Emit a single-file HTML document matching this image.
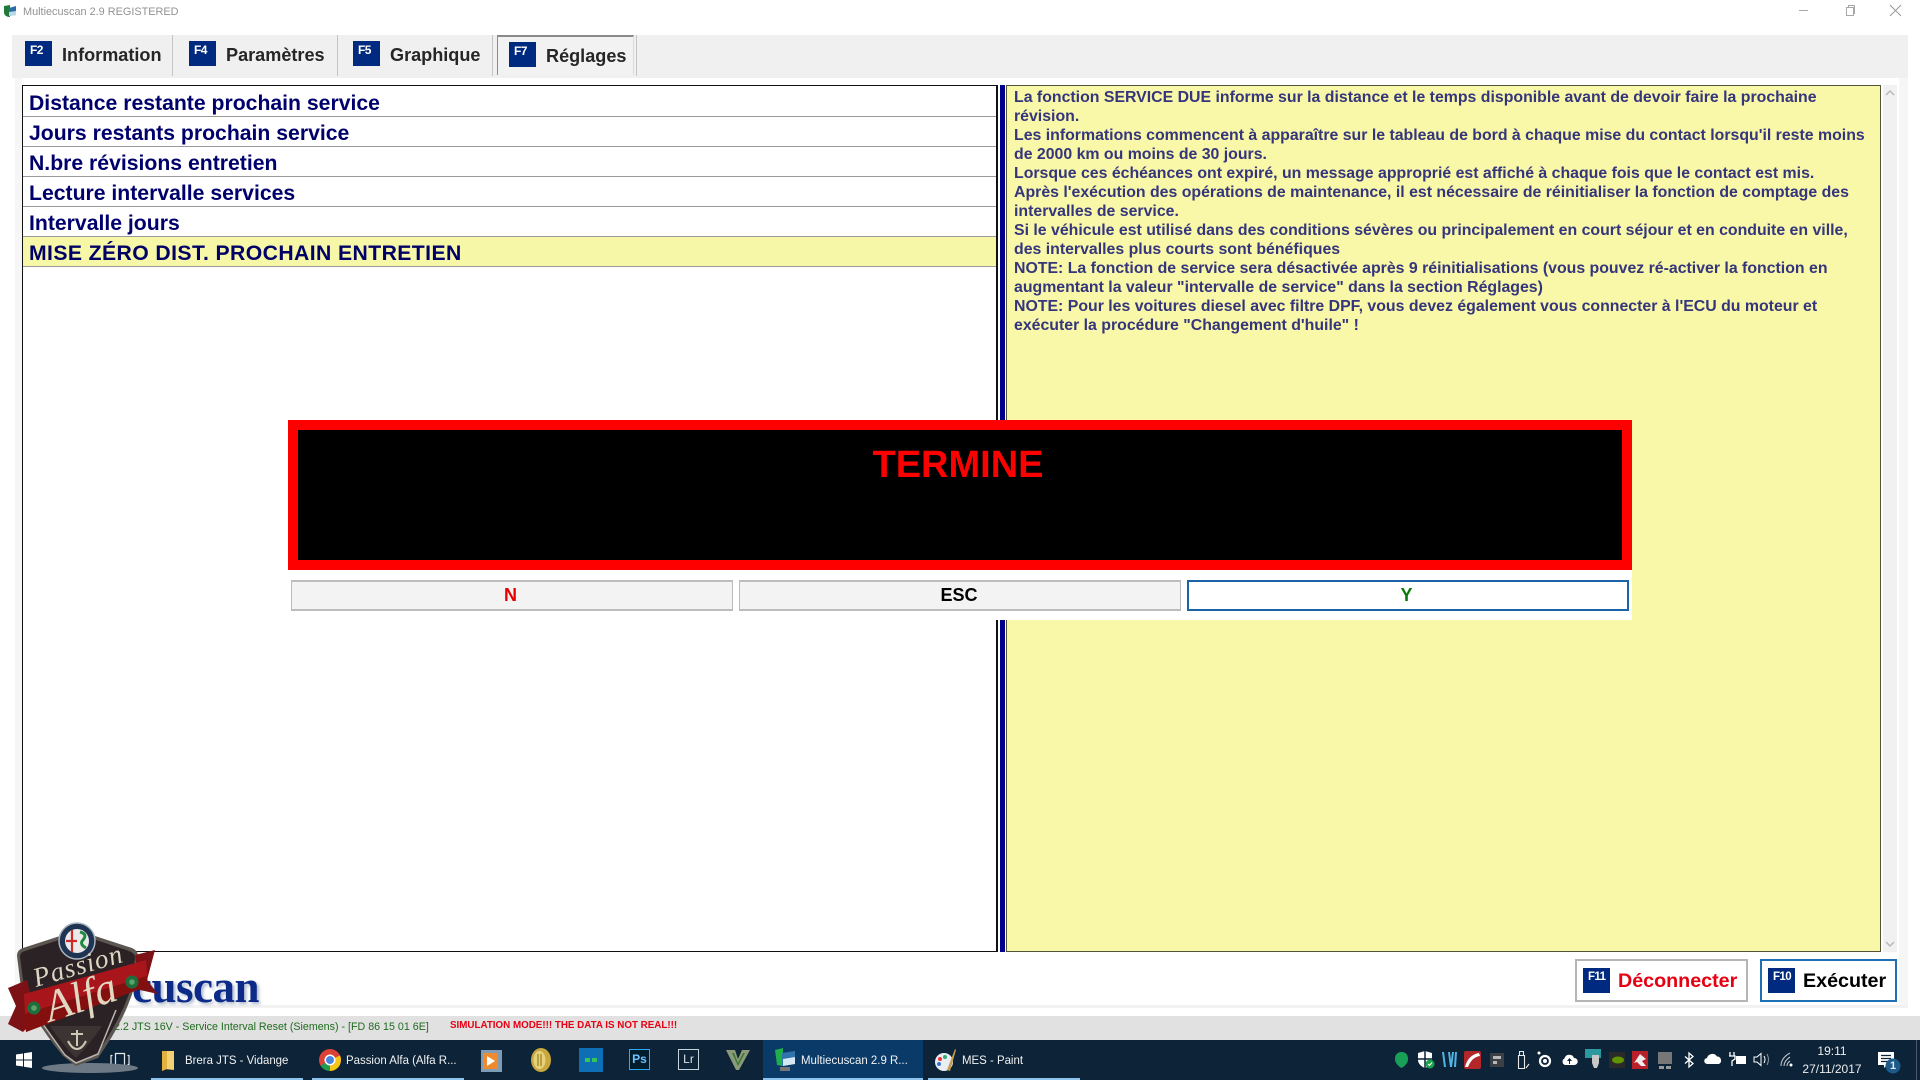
<!DOCTYPE html>
<html lang="fr"><head><meta charset="utf-8"><title>Multiecuscan</title>
<style>
html,body{margin:0;padding:0;background:#fff}
body{width:1920px;height:1080px;position:relative;overflow:hidden;font-family:"Liberation Sans",sans-serif}
.a{position:absolute;white-space:nowrap}
.key{position:absolute;width:27px;height:25px;background:#002a7f;color:#fff;font:bold 12px/16px "Liberation Sans",sans-serif;letter-spacing:-.6px;text-align:left;padding-left:5px;padding-top:1px;box-sizing:border-box}
.tab{position:absolute;top:43px;font:bold 18.1px/24px "Liberation Sans",sans-serif;color:#262626;white-space:nowrap}
.row{position:absolute;left:23px;width:967px;height:29px;border-bottom:1px solid #9a9a9a;font:bold 21.2px/33px "Liberation Sans",sans-serif;color:#00006c;padding-left:6px;box-sizing:content-box;white-space:nowrap}
.pl{position:absolute;left:1014px;font:bold 15.87px/19px "Liberation Sans",sans-serif;color:#35357c;white-space:nowrap}
.btn{position:absolute;top:580px;height:31px;box-sizing:border-box;border:2px solid #bdbdbd;border-left-width:1px;border-right-width:1px;background:#f3f3f3;text-align:center;font:bold 18px/27px "Liberation Sans",sans-serif}
.tb{position:absolute;top:1052px;font:12.3px/16px "Liberation Sans",sans-serif;color:#f2f2f2;white-space:nowrap;transform:scaleX(.93);transform-origin:left}
.ul{position:absolute;top:1078px;height:2px;background:#8cc4ee}
svg{position:absolute;overflow:visible}
</style></head><body>

<!-- title bar -->
<svg style="left:3px;top:4px" width="14" height="15" viewBox="0 0 14 15"><path d="M1 2 L7 1 L7 13 Q2 13 1 9Z" fill="#1f7a3a"/><path d="M6 4 L13 2 L13 11 L6 12Z" fill="#2a6ca8"/><path d="M6 8 L13 7 L13 11 L6 12Z" fill="#bcd9e8"/></svg>
<div class="a" style="left:23px;top:5px;font-size:10.9px;line-height:14px;color:#929292">Multiecuscan 2.9 REGISTERED</div>
<div class="a" style="left:1799px;top:10px;width:9px;height:1px;background:#a8a8a8"></div>
<svg style="left:1844px;top:5px" width="11" height="12"><path d="M2.500 2.500H9.500V10.500H2.500ZM4.500 2.500V.5H10.500V8.500H9.500" fill="none" stroke="#a8a8a8"/></svg>
<svg style="left:1889px;top:4px" width="13" height="13"><path d="M1 1L12 12M12 1L1 12" fill="none" stroke="#999"/></svg>

<!-- tabs strip -->
<div class="a" style="left:12px;top:35px;width:1896px;height:43px;background:#f0f0f0"></div>
<div class="a" style="left:15px;top:78px;width:7px;height:927px;background:#f6f6f6"></div>
<div class="a" style="left:1899px;top:78px;width:9px;height:927px;background:#f6f6f6"></div>
<div class="a" style="left:15px;top:1005px;width:1893px;height:3px;background:#f2f2f2"></div>

<div class="key" style="left:25px;top:41px">F2</div><div class="tab" style="left:62px">Information</div>
<div class="a" style="left:172px;top:35px;width:1px;height:41px;background:#c4c4c4"></div>
<div class="key" style="left:189px;top:41px">F4</div><div class="tab" style="left:226px">Paramètres</div>
<div class="a" style="left:337px;top:35px;width:1px;height:41px;background:#c4c4c4"></div>
<div class="key" style="left:353px;top:41px">F5</div><div class="tab" style="left:390px">Graphique</div>
<div class="a" style="left:492px;top:35px;width:1px;height:41px;background:#c4c4c4"></div>
<div class="a" style="left:497px;top:35px;width:135px;height:38px;border-top:2px solid #8a8a8a;border-left:1px solid #8a8a8a;border-right:1px solid #dcdcdc;background:#f2f2f2"></div>
<div class="a" style="left:636px;top:35px;width:1px;height:41px;background:#c4c4c4"></div>
<div class="key" style="left:509px;top:42px">F7</div><div class="tab" style="left:546px;top:44px">Réglages</div>

<!-- left list -->
<div class="a" style="left:22px;top:85px;width:976px;height:867px;box-sizing:border-box;border:1px solid #111;border-right:2px solid #111;background:#fff"></div>
<div class="row" style="top:87px">Distance restante prochain service</div>
<div class="row" style="top:117px">Jours restants prochain service</div>
<div class="row" style="top:147px">N.bre révisions entretien</div>
<div class="row" style="top:177px">Lecture intervalle services</div>
<div class="row" style="top:207px">Intervalle jours</div>
<div class="row" style="top:237px;background:#f7f7a8;color:#000066;letter-spacing:.4px">MISE ZÉRO DIST. PROCHAIN ENTRETIEN</div>

<!-- divider -->
<div class="a" style="left:1000px;top:85px;width:5px;height:867px;background:#00008b"></div>

<!-- right panel -->
<div class="a" style="left:1006px;top:85px;width:875px;height:867px;box-sizing:border-box;border:1px solid #55553a;background:#f8f8a8"></div>
<div class="pl" style="top:88px">La fonction SERVICE DUE informe sur la distance et le temps disponible avant de devoir faire la prochaine</div>
<div class="pl" style="top:107px">révision.</div>
<div class="pl" style="top:126px">Les informations commencent à apparaître sur le tableau de bord à chaque mise du contact lorsqu'il reste moins</div>
<div class="pl" style="top:145px">de 2000 km ou moins de 30 jours.</div>
<div class="pl" style="top:164px">Lorsque ces échéances ont expiré, un message approprié est affiché à chaque fois que le contact est mis.</div>
<div class="pl" style="top:183px">Après l'exécution des opérations de maintenance, il est nécessaire de réinitialiser la fonction de comptage des</div>
<div class="pl" style="top:202px">intervalles de service.</div>
<div class="pl" style="top:221px">Si le véhicule est utilisé dans des conditions sévères ou principalement en court séjour et en conduite en ville,</div>
<div class="pl" style="top:240px">des intervalles plus courts sont bénéfiques</div>
<div class="pl" style="top:259px">NOTE: La fonction de service sera désactivée après 9 réinitialisations (vous pouvez ré-activer la fonction en</div>
<div class="pl" style="top:278px">augmentant la valeur "intervalle de service" dans la section Réglages)</div>
<div class="pl" style="top:297px">NOTE: Pour les voitures diesel avec filtre DPF, vous devez également vous connecter à l'ECU du moteur et</div>
<div class="pl" style="top:316px">exécuter la procédure "Changement d'huile" !</div>

<!-- scrollbar -->
<div class="a" style="left:1883px;top:85px;width:14px;height:867px;background:#f1f1f1"></div>
<svg style="left:1885px;top:89px" width="10" height="8"><path d="M1 6L5 2L9 6" fill="none" stroke="#b8b8b8" stroke-width="1.500"/></svg>
<svg style="left:1885px;top:940px" width="10" height="8"><path d="M1 2L5 6L9 2" fill="none" stroke="#b8b8b8" stroke-width="1.500"/></svg>

<!-- dialog -->
<div class="a" style="left:288px;top:570px;width:1344px;height:50px;background:#fff"></div>
<div class="a" style="left:288px;top:420px;width:1344px;height:150px;box-sizing:border-box;border:10px solid #f00;background:#000"></div>
<div class="a" style="left:288px;top:445px;width:1340px;text-align:center;font:bold 38px/40px 'Liberation Sans',sans-serif;color:#f00">TERMINE</div>
<div class="btn" style="left:291px;width:442px;color:#e60000;text-indent:-3px">N</div>
<div class="btn" style="left:739px;width:442px;color:#000;text-indent:-2px">ESC</div>
<div class="btn" style="left:1187px;width:442px;color:#0a7a0a;border:2px solid #1b63a8;background:#fff;text-indent:-3px">Y</div>

<!-- bottom buttons -->
<div class="a" style="left:1575px;top:959px;width:173px;height:43px;box-sizing:border-box;border:2px solid #b5b5b5;background:#fff"></div>
<div class="key" style="left:1583px;top:968px;font-size:11.5px">F11</div>
<div class="a" style="left:1618px;top:969px;font:bold 19.7px/24px 'Liberation Sans',sans-serif;color:#e60012">Déconnecter</div>
<div class="a" style="left:1760px;top:959px;width:137px;height:43px;box-sizing:border-box;border:2px solid #1f6fb5;background:#fff"></div>
<div class="key" style="left:1768px;top:968px;font-size:11.5px">F10</div>
<div class="a" style="left:1803px;top:969px;font:bold 19.7px/24px 'Liberation Sans',sans-serif;color:#000">Exécuter</div>

<!-- logo word -->
<div class="a" style="left:132px;top:962px;font:bold 45px/50px 'Liberation Serif',serif;color:#0c2a88;text-shadow:2px 2px 3px #a9b5c8;letter-spacing:-.5px">cuscan</div>

<!-- status bar -->
<div class="a" style="left:0;top:1016px;width:1920px;height:24px;background:#e1e1e1"></div>
<div class="a" style="left:114px;top:1019px;font-size:10.7px;line-height:16px;color:#1f6b1f">2.2 JTS 16V - Service Interval Reset (Siemens) - [FD 86 15 01 6E]</div>
<div class="a" style="left:450px;top:1018px;font-size:9.8px;font-weight:bold;line-height:16px;color:#e60012">SIMULATION MODE!!! THE DATA IS NOT REAL!!!</div>

<!-- taskbar -->
<div class="a" style="left:0;top:1040px;width:1920px;height:40px;background:#0c2338"></div>
<div class="a" style="left:763px;top:1040px;width:160px;height:40px;background:#0a3b68"></div>
<div class="ul" style="left:151px;width:152px"></div>
<div class="ul" style="left:312px;width:152px"></div>
<div class="ul" style="left:763px;width:160px"></div>
<div class="ul" style="left:928px;width:152px"></div>

<svg style="left:16px;top:1052px" width="16" height="16"><path d="M0 2.500L7 1.500V7.500H0ZM8 1.300L16 0V7.500H8ZM0 8.500H7V14.500L0 13.500ZM8 8.500H16V16L8 14.700Z" fill="#fff"/></svg>
<svg style="left:110px;top:1052px" width="20" height="16"><path d="M5.500 1.500H14.500V14.500H5.500ZM2.500 3.500H1V12.500H2.500M17.500 3.500H19V12.500H17.500" fill="none" stroke="#e8e8e8" stroke-width="1.200"/></svg>
<svg style="left:160px;top:1050px" width="16" height="22"><path d="M2 1H14V20L5 19L2 21Z" fill="#f4d273"/><path d="M2 1H7V19L2 21Z" fill="#e2b23e"/></svg>
<div class="tb" style="left:185px">Brera JTS - Vidange</div>

<svg style="left:319px;top:1049px" width="22" height="22" viewBox="0 0 22 22"><circle cx="11" cy="11" r="11" fill="#dc4336"/><path d="M11 11L21 6.500A11 11 0 0 1 11 22Z" fill="#f5c518"/><path d="M11 11L11 22A11 11 0 0 1 1.500 16.500Z" fill="#1e9c52"/><circle cx="11" cy="11" r="5.500" fill="#fff"/><circle cx="11" cy="11" r="4" fill="#4a86e0"/></svg>
<div class="tb" style="left:346px">Passion Alfa (Alfa R...</div>

<svg style="left:481px;top:1050px" width="21" height="22"><rect x="0" y="0" width="21" height="22" fill="#7f9cb6"/><rect x="2" y="3" width="15" height="16" fill="#ef8a2e"/><path d="M6 6L14 11L6 16Z" fill="#fff"/></svg>
<svg style="left:530px;top:1048px" width="22" height="24"><ellipse cx="11" cy="12" rx="10" ry="12" fill="#c9a93e"/><ellipse cx="9.500" cy="12" rx="6" ry="9" fill="#e6d27a"/><path d="M8 6V18M11 6V18" stroke="#a98c2c" stroke-width="1.500"/></svg>
<svg style="left:579px;top:1048px" width="24" height="24"><rect width="24" height="24" fill="#0f6fb4"/><rect x="6" y="10" width="5" height="4" fill="#35c45a"/><rect x="13" y="10" width="5" height="4" fill="#35c45a"/></svg>
<div class="a" style="left:629px;top:1049px;width:21px;height:21px;box-sizing:border-box;border:1px solid #31a8ff;background:#001d2e;color:#6fc3ff;font:bold 12px/19px 'Liberation Sans',sans-serif;text-align:center">Ps</div>
<div class="a" style="left:678px;top:1049px;width:21px;height:21px;box-sizing:border-box;border:1px solid #c8d4dc;background:#0c2338;color:#d8e2e8;font:12px/19px 'Liberation Sans',sans-serif;text-align:center">Lr</div>
<svg style="left:726px;top:1049px" width="24" height="22"><path d="M0 1H9L12 10L16 1H24L13 21H10Z" fill="#8a9a7a"/><path d="M6 4H8L12 14L17 4H19L12 17Z" fill="#3d7a2c"/></svg>

<svg style="left:773px;top:1047px" width="24" height="26"><path d="M2 3L10 1V19L4 18Z" fill="#1fae4c"/><path d="M9 6L22 4V17L9 19Z" fill="#2f74aa"/><path d="M10 12L22 10V17L10 19Z" fill="#d3e8f2"/><rect x="7" y="20" width="10" height="4" fill="#777"/></svg>
<div class="tb" style="left:801px">Multiecuscan 2.9 R...</div>
<svg style="left:933px;top:1048px" width="24" height="24"><circle cx="11" cy="14" r="9" fill="#e8eef2"/><circle cx="7" cy="11" r="2" fill="#e33"/><circle cx="12" cy="9" r="2" fill="#3a7"/><circle cx="6" cy="16" r="2" fill="#37c"/><path d="M14 22L22 1L23 2L17 23Z" fill="#c89a4e"/></svg>
<div class="tb" style="left:962px">MES - Paint</div>

<!-- tray -->
<svg style="left:1395px;top:1052px" width="13" height="16"><path d="M6.500 0C11 0 13 3 13 7C13 11 10 14 6.500 16C3 14 0 11 0 7C0 3 2 0 6.500 0Z" fill="#18a058"/></svg>
<svg style="left:1418px;top:1051px" width="16" height="18"><path d="M7 0L14 2V9C14 13 10 16 7 17C4 16 0 13 0 9V2Z" fill="#fff"/><path d="M7 0V17M0 8H14" stroke="#0c2338" stroke-width="1.500"/><circle cx="12" cy="13" r="4.500" fill="#1aa34a"/><path d="M10 13L11.500 14.500L14 11.500" stroke="#fff" fill="none"/></svg>
<svg style="left:1441px;top:1051px" width="16" height="17"><path d="M1 1L3 16L5 16L3 1ZM7 1L9 16H11L13 1H11L10 9L9 1ZM14 1L13 16H15L16 1Z" fill="#4fb4e6"/></svg>
<svg style="left:1464px;top:1051px" width="17" height="18"><rect width="17" height="18" rx="2" fill="#b3262a"/><path d="M1 16Q4 4 15 2L16 5Q8 6 4 16Z" fill="#fff"/></svg>
<div class="a" style="left:1490px;top:1053px;width:14px;height:14px;background:#3b3f46"></div><div class="a" style="left:1493px;top:1056px;width:8px;height:3px;background:#b8b8b8"></div><div class="a" style="left:1493px;top:1061px;width:4px;height:3px;background:#b8b8b8"></div>
<svg style="left:1515px;top:1050px" width="15" height="20"><path d="M3.500 5.500H9.500V18.500H3.500ZM4.500 5.500V1.500H8.500V5.500M11 18L14 14" fill="none" stroke="#e8e8e8" stroke-width="1.100"/></svg>
<svg style="left:1537px;top:1051px" width="16" height="17"><circle cx="8" cy="10" r="5" fill="none" stroke="#fff" stroke-width="2.200"/><circle cx="8" cy="10" r="2" fill="#fff"/><circle cx="2" cy="2" r="1.500" fill="#fff"/></svg>
<svg style="left:1561px;top:1054px" width="17" height="12"><path d="M4 11A3.500 3.500 0 0 1 3.500 4.500A5 5 0 0 1 13 4A3.500 3.500 0 0 1 13.500 11Z" fill="#fff"/><path d="M8.500 4L6 7H8V10H9V7H11Z" fill="#0c2338"/></svg>
<svg style="left:1585px;top:1049px" width="16" height="20"><rect width="16" height="9" fill="#2b9a9e"/><path d="M7 6H14V14L12 19H9L7 14Z" fill="#c8c8c8"/></svg>
<svg style="left:1609px;top:1052px" width="16" height="16"><rect width="16" height="16" fill="#2a2a2a"/><ellipse cx="9" cy="8" rx="6" ry="3.500" fill="#5e9400"/></svg>
<svg style="left:1632px;top:1051px" width="16" height="18"><rect width="16" height="18" fill="#b8202a"/><path d="M2 12L8 3L14 8L10 10L14 15H9L5 11Z" fill="#eee"/></svg>
<svg style="left:1658px;top:1052px" width="15" height="18"><rect width="14" height="12" fill="#777"/><rect x="1" y="14" width="5" height="3" fill="#999"/><rect x="8" y="14" width="5" height="3" fill="#999"/></svg>
<svg style="left:1684px;top:1052px" width="10" height="16"><path d="M1 4.500L9 11.500L5 15V1L9 4.500L1 11.500" fill="none" stroke="#fff" stroke-width="1.300"/></svg>
<svg style="left:1704px;top:1053px" width="18" height="12"><path d="M3.500 11A3 3 0 0 1 3 5A5.500 5.500 0 0 1 13 3.500A4 4 0 0 1 15 11Z" fill="#fff"/></svg>
<svg style="left:1729px;top:1052px" width="17" height="15"><rect x="7" y="4" width="10" height="8" fill="#fff"/><path d="M1 0V4M5 0V4M0 4H6V7L3 9V14" fill="none" stroke="#fff" stroke-width="1.300"/></svg>
<svg style="left:1753px;top:1052px" width="16" height="15"><path d="M1 5H4L8 1.500V13.500L4 10H1Z" fill="none" stroke="#fff"/><path d="M11 4Q13 7.500 11 11" fill="none" stroke="#fff"/><path d="M14 2Q17 7.500 14 13" fill="none" stroke="#8a97a4"/></svg>
<svg style="left:1780px;top:1052px" width="14" height="15"><path d="M1 14Q1 6 10 1M4 14Q4 9 10 5M7 14Q7 11 10 9" fill="none" stroke="#b8c0c8" stroke-width="1.100"/><circle cx="11" cy="13" r="1.500" fill="#fff"/></svg>
<div class="a" style="left:1800px;top:1044px;width:64px;text-align:center;font-size:12px;line-height:15px;color:#eee">19:11</div>
<div class="a" style="left:1800px;top:1061px;width:64px;text-align:center;font-size:12px;line-height:16px;color:#eee">27/11/2017</div>
<svg style="left:1878px;top:1051px" width="26" height="26"><path d="M0 1H16V14H9L6 17V14H0Z" fill="#fff"/><path d="M3 4.500H13M3 7.500H13M3 10.500H10" stroke="#0c2338" stroke-width="1.200"/><circle cx="15" cy="15" r="7.500" fill="#1c5a8a"/></svg>
<div class="a" style="left:1888px;top:1058px;width:10px;text-align:center;font:bold 11px/16px 'Liberation Sans',sans-serif;color:#dfeaf3">1</div>
<div class="a" style="left:1916px;top:1040px;width:1px;height:40px;background:#4a5a6a"></div>

<!-- Passion Alfa badge -->
<svg style="left:0;top:0" width="1920" height="1080" viewBox="0 0 1920 1080">
  <ellipse cx="90" cy="1068" rx="48" ry="5" fill="#6d7a86"/>
  <path d="M17 956Q17 950 23 948L60 936H95L132 948Q139 951 138 958L135 985Q125 1020 98 1058L76 1066L63 1056Q33 1020 21 988Z" fill="#5c5651"/>
  <path d="M20 957Q20 952 25 951L62 939H93L129 951Q135 953 135 958L132 985Q122 1018 96 1055L76 1063L65 1055Q36 1018 24 987Z" fill="#2a2224"/>
  <path d="M50 1026Q62 1044 76 1058Q90 1044 102 1026Z" fill="#3a3532"/>
  <path d="M116 1010L98 1054L76 1063L65 1055L40 1020" fill="none" stroke="#b9b5ae" stroke-width="1.500"/>
  <circle cx="77" cy="941" r="18" fill="#1e3452"/>
  <circle cx="77" cy="941" r="18" fill="none" stroke="#aab5c0" stroke-width="1.500"/>
  <circle cx="77" cy="941" r="12" fill="#ebeaea"/>
  <path d="M72 930V952M66 941H77" stroke="#cf2a2a" stroke-width="2.200"/>
  <path d="M80 932Q88 934 83 940Q79 944 86 948" fill="none" stroke="#1f8a3e" stroke-width="3"/>
  <path d="M8 988L27 980L36 1018L23 1032L8 1024L16 1006Z" fill="#7c1216"/>
  <path d="M135 955L155 950L147 980L158 994L140 990Z" fill="#7c1216"/>
  <path d="M24 994L146 960L148 986L26 1032Z" fill="#a8161c"/>
  <path d="M24 1014L147 976L148 986L26 1032Z" fill="#83100f"/>
  <circle cx="34" cy="1008" r="6.500" fill="#1f6d3d"/><circle cx="34" cy="1008" r="2.800" fill="#59a36a"/>
  <circle cx="132" cy="982" r="6.500" fill="#1f6d3d"/><circle cx="132" cy="982" r="2.800" fill="#59a36a"/>
  <text transform="translate(36 987) rotate(-16)" font-family="'Liberation Serif',serif" font-style="italic" font-size="27" letter-spacing="1" fill="#ded6c3">Passion</text>
  <text transform="translate(50 1022) rotate(-18)" font-family="'Liberation Serif',serif" font-style="italic" font-size="44" fill="#e2d8c2">Alfa</text>
  <path d="M77 1030V1046M71 1034H83M68 1041Q72 1049 77 1049Q82 1049 86 1041" fill="none" stroke="#cfc7b5" stroke-width="2"/>
</svg>
</body></html>
